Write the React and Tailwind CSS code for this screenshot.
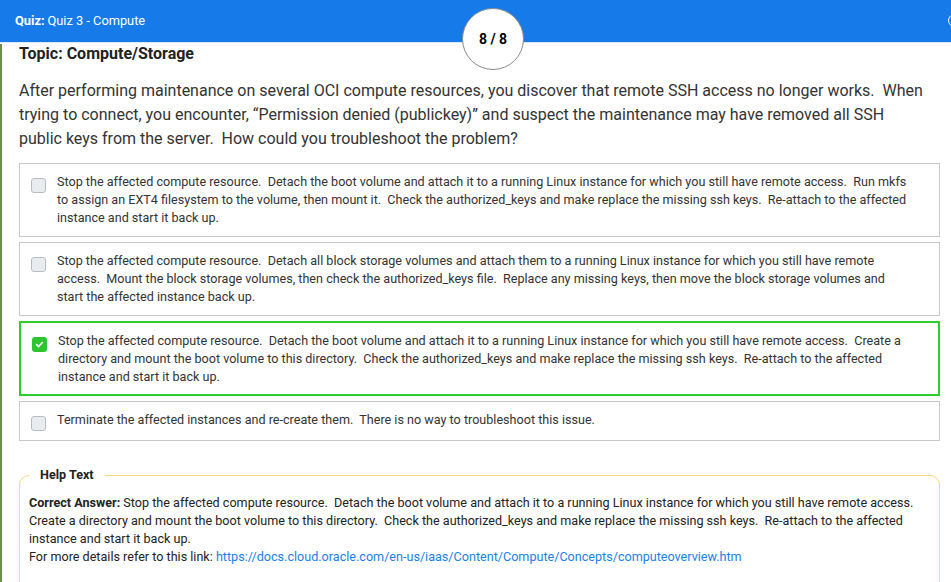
import React from "react";

const S = "\u00a0 ";

function Check({ checked }) {
  if (checked) {
    return (
      <div className="flex h-[15px] w-[15px] shrink-0 items-center justify-center rounded-[3px] bg-[#2cc532]">
        <svg width="9" height="9" viewBox="0 0 10 10">
          <path d="M1.8 5.2 L4 7.3 L8.2 2.8" fill="none" stroke="white" strokeWidth="1.8" strokeLinecap="round" strokeLinejoin="round" />
        </svg>
      </div>
    );
  }
  return <div className="h-[15px] w-[15px] shrink-0 rounded-[3px] border border-[#b8bcc2] bg-[#e9ecef]" />;
}

function Option({ checked, lines }) {
  return (
    <div
      className={
        checked
          ? "flex gap-[11px] border-2 border-[#2ccf2c] pl-[11px] pr-3 pt-[9px] pb-[8px]"
          : "flex gap-[11px] border border-[#c8c8c8] pl-[11px] pr-3 py-[9px]"
      }
    >
      <div className="pt-[5px]">
        <Check checked={checked} />
      </div>
      <div className="text-[12.6px] leading-[18px] text-[#333]">
        {lines.map((l, i) => (
          <div key={i} className="whitespace-nowrap">{l}</div>
        ))}
      </div>
    </div>
  );
}

export default function App() {
  return (
    <div className="relative h-[582px] w-[951px] overflow-hidden bg-white" style={{ fontFamily: "Roboto, 'Liberation Sans', sans-serif" }}>
      <div className="flex h-[43px] items-center border-b border-[#d9e8fb] bg-[#167be9] pl-[15px] text-[12.8px] text-white">
        <span className="font-bold">Quiz:</span>
        <span className="ml-[3px]">Quiz 3 - Compute</span>
      </div>
      <div className="absolute left-[948px] top-[14px] h-[13px] w-[13px] rounded-full border-[1.5px] border-white" />
      <div className="absolute left-[462px] top-[8px] flex h-[62px] w-[62px] items-center justify-center rounded-full border border-[#8a8a8a] bg-white text-[14px] font-bold text-black">
        8 / 8
      </div>
      <div className="absolute left-0 top-[44px] h-[538px] w-[2px] bg-[#6b8e4e]" />
      <div className="pl-[19px] pr-[11px]">
        <div className="pt-[1px] text-[16px] font-bold leading-[20px] text-[#222]">Topic: Compute/Storage</div>
        <div className="mt-[15px] text-[16px] leading-[24px] text-[#333]">
          <div className="whitespace-nowrap">After performing maintenance on several OCI compute resources, you discover that remote SSH access no longer works.{S}When</div>
          <div className="whitespace-nowrap">trying to connect, you encounter, “Permission denied (publickey)” and suspect the maintenance may have removed all SSH</div>
          <div className="whitespace-nowrap">public keys from the server.{S}How could you troubleshoot the problem?</div>
        </div>
        <div className="mt-[12px] flex flex-col gap-[5px]">
          <Option
            lines={[
              `Stop the affected compute resource.${S}Detach the boot volume and attach it to a running Linux instance for which you still have remote access.${S}Run mkfs`,
              `to assign an EXT4 filesystem to the volume, then mount it.${S}Check the authorized_keys and make replace the missing ssh keys.${S}Re-attach to the affected`,
              "instance and start it back up.",
            ]}
          />
          <Option
            lines={[
              `Stop the affected compute resource.${S}Detach all block storage volumes and attach them to a running Linux instance for which you still have remote`,
              `access.${S}Mount the block storage volumes, then check the authorized_keys file.${S}Replace any missing keys, then move the block storage volumes and`,
              "start the affected instance back up.",
            ]}
          />
          <Option
            checked
            lines={[
              `Stop the affected compute resource.${S}Detach the boot volume and attach it to a running Linux instance for which you still have remote access.${S}Create a`,
              `directory and mount the boot volume to this directory.${S}Check the authorized_keys and make replace the missing ssh keys.${S}Re-attach to the affected`,
              "instance and start it back up.",
            ]}
          />
          <Option lines={[`Terminate the affected instances and re-create them.${S}There is no way to troubleshoot this issue.`]} />
        </div>
        <fieldset className="mt-[26px] h-[140px] rounded-[10px] border border-[#f6d77e] px-[9px] pt-[11px]">
          <legend className="px-[11px] text-[12.6px] font-bold leading-[16px] text-[#222]">Help Text</legend>
          <div className="text-[12.6px] leading-[18px] text-[#222]">
            <div className="whitespace-nowrap">
              <span className="font-bold">Correct Answer:</span> Stop the affected compute resource.{S}Detach the boot volume and attach it to a running Linux instance for which you still have remote access.
            </div>
            <div className="whitespace-nowrap">Create a directory and mount the boot volume to this directory.{S}Check the authorized_keys and make replace the missing ssh keys.{S}Re-attach to the affected</div>
            <div className="whitespace-nowrap">instance and start it back up.</div>
            <div className="whitespace-nowrap">
              For more details refer to this link:{" "}
              <span className="text-[#1a7fe8]">https://docs.cloud.oracle.com/en-us/iaas/Content/Compute/Concepts/computeoverview.htm</span>
            </div>
          </div>
        </fieldset>
      </div>
    </div>
  );
}
